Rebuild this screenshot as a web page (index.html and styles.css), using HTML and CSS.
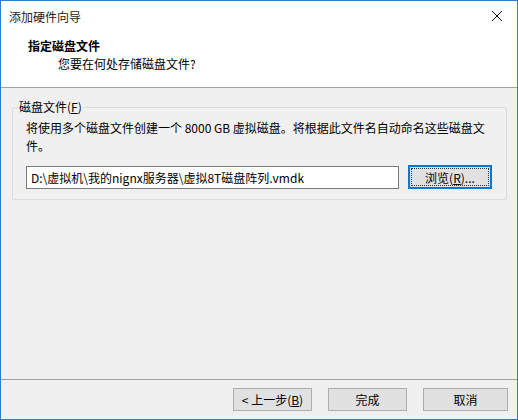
FILE: index.html
```html
<!DOCTYPE html>
<html lang="zh-CN">
<head>
  <meta charset="UTF-8" />
  <title>添加硬件向导</title>
  <link rel="stylesheet" href="styles.css">
</head>
<body>
  <div class="window">
    <div class="titlebar">
      <span class="title">添加硬件向导</span>
      <svg class="close" width="12" height="12" viewBox="0 0 12 12">
        <path d="M1 1 L11 11 M11 1 L1 11" stroke="#111" stroke-width="1" fill="none" />
      </svg>
    </div>

    <div class="header">
      <div class="heading">指定磁盘文件</div>
      <div class="subheading">您要在何处存储磁盘文件?</div>
    </div>

    <div class="content">
      <fieldset class="group">
        <legend>磁盘文件(<u>F</u>)</legend>
        <p class="desc">将使用多个磁盘文件创建一个 8000 GB 虚拟磁盘。将根据此文件名自动命名这些磁盘文件。</p>
        <div class="file-row">
          <input type="text" class="path" value="D:\虚拟机\我的nignx服务器\虚拟8T磁盘阵列.vmdk" />
          <button class="btn browse">浏览(<u>R</u>)...</button>
        </div>
      </fieldset>
    </div>

    <div class="footer">
      <button class="btn">&lt; 上一步(<u>B</u>)</button>
      <button class="btn">完成</button>
      <button class="btn">取消</button>
    </div>
  </div>
</body>
</html>
```

FILE: styles.css
```css
body {
  margin: 0;
  font-family: "Noto Sans CJK SC", "Liberation Sans", sans-serif;
  font-size: 12px;
  color: #000;
  background: #f0f0f0;
}
.window { width: 516px; height: 418px; border: 1px solid #2b7ed2; background: #f0f0f0; display: flex; flex-direction: column; }
.titlebar { height: 30px; background: #fff; display: flex; align-items: center; justify-content: space-between; padding: 0 14px 0 8px; }
.title { font-size: 12px; color: #222; }
.header { background: #fff; height: 56px; padding-left: 27px; border-bottom: 1px solid #a0a0a0; }
.heading { font-weight: bold; line-height: 18px; padding-top: 6px; }
.subheading { padding-left: 30px; line-height: 18px; }
.content { flex: 1; padding: 11px 11px 0 11px; border-bottom: 1px solid #a0a0a0; }
.group { margin: 0; border: 1px solid #dcdcdc; border-radius: 2px; padding: 0 10px 10px 13px; }
.group legend { padding: 0 1px; margin-left: -8px; line-height: 16px; }
.desc { margin: 4px 0 0 0; line-height: 18px; width: 470px; }
.file-row { display: flex; align-items: center; margin-top: 10px; }
.path { width: 363px; height: 19px; padding: 1px 4px; border: 1px solid #7a7a7a; font-family: inherit; font-size: 12px; margin: 0; }
.btn { font-family: inherit; font-size: 12px; background: #e1e1e1; border: 1px solid #adadad; height: 23px; padding: 0; margin: 0; color: #000; }
.browse { width: 84px; height: 24px; margin-left: 9px; border: 2px solid #0078d7; outline: 1px dotted #333; outline-offset: -4px; }
.footer { height: 39px; display: flex; justify-content: flex-end; align-items: center; gap: 16px; padding-right: 9px; }
.footer .btn { width: 79px; }
.footer .btn:last-child { width: 85px; }
```
